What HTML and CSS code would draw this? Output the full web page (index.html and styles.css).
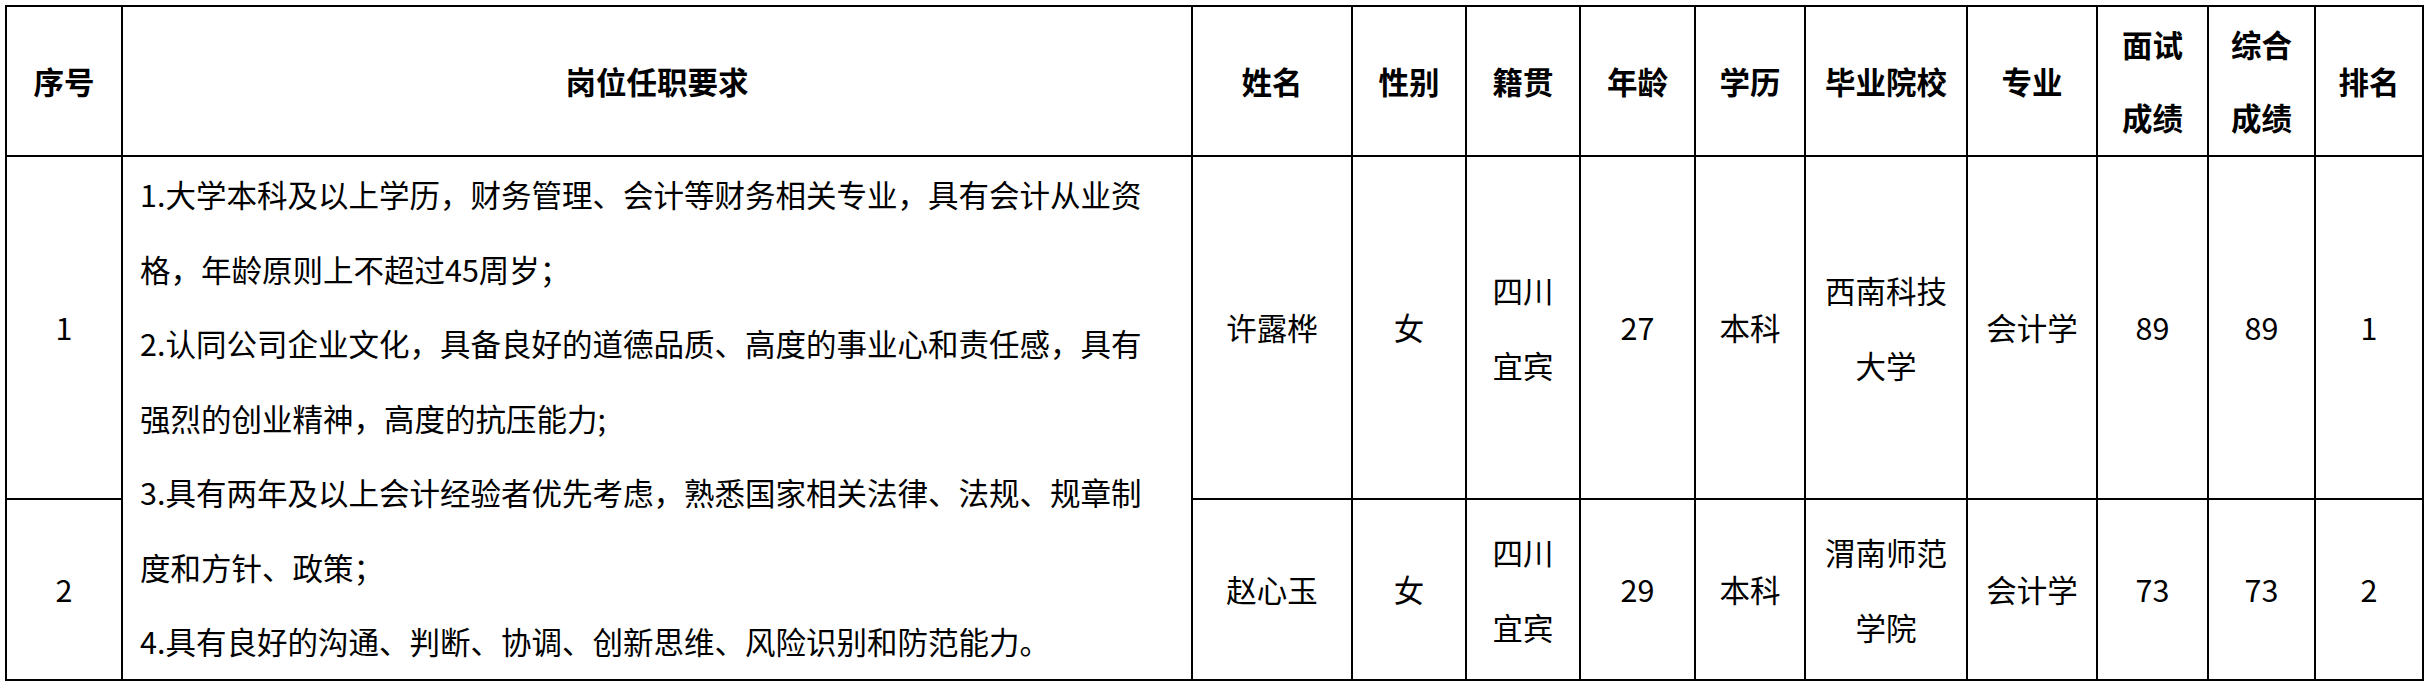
FILE: index.html
```html
<!DOCTYPE html>
<html lang="zh-CN">
<head>
<meta charset="utf-8">
<title>面试成绩表</title>
<link rel="stylesheet" href="styles.css">
</head>
<body>
<table class="grid">
  <colgroup>
    <col class="c-no">
    <col class="c-req">
    <col class="c-name">
    <col class="c-sex">
    <col class="c-origin">
    <col class="c-age">
    <col class="c-edu">
    <col class="c-school">
    <col class="c-major">
    <col class="c-score">
    <col class="c-total">
    <col class="c-rank">
  </colgroup>
  <thead>
    <tr class="row-head">
      <th>序号</th>
      <th>岗位任职要求</th>
      <th>姓名</th>
      <th>性别</th>
      <th>籍贯</th>
      <th>年龄</th>
      <th>学历</th>
      <th>毕业院校</th>
      <th>专业</th>
      <th>面试<br>成绩</th>
      <th>综合<br>成绩</th>
      <th>排名</th>
    </tr>
  </thead>
  <tbody>
    <tr class="row-1">
      <td>1</td>
      <td class="req" rowspan="2">1.大学本科及以上学历，财务管理、会计等财务相关专业，具有会计从业资<br>格，年龄原则上不超过45周岁；<br>2.认同公司企业文化，具备良好的道德品质、高度的事业心和责任感，具有<br>强烈的创业精神，高度的抗压能力;<br>3.具有两年及以上会计经验者优先考虑，熟悉国家相关法律、法规、规章制<br>度和方针、政策；<br>4.具有良好的沟通、判断、协调、创新思维、风险识别和防范能力。</td>
      <td>许露桦</td>
      <td>女</td>
      <td>四川<br>宜宾</td>
      <td>27</td>
      <td>本科</td>
      <td>西南科技<br>大学</td>
      <td>会计学</td>
      <td>89</td>
      <td>89</td>
      <td>1</td>
    </tr>
    <tr class="row-2">
      <td>2</td>
      <td>赵心玉</td>
      <td>女</td>
      <td>四川<br>宜宾</td>
      <td>29</td>
      <td>本科</td>
      <td>渭南师范<br>学院</td>
      <td>会计学</td>
      <td>73</td>
      <td>73</td>
      <td>2</td>
    </tr>
  </tbody>
</table>
</body>
</html>
```
FILE: styles.css
```css
html, body {
  margin: 0;
  padding: 0;
  background: #ffffff;
}

body {
  font-family: "Noto Sans CJK SC", "Noto Sans", sans-serif;
  color: #000000;
}

.grid {
  margin: 5px 0 0 5px;
  border-collapse: collapse;
  table-layout: fixed;
  width: 2417px;
  font-size: 30.5px;
}

.grid th,
.grid td {
  border: 2px solid #000000;
  padding: 0;
  text-align: center;
  vertical-align: middle;
  white-space: nowrap;
  line-height: 74.5px;
}

.grid th {
  font-weight: 700;
  line-height: 73px;
}

.c-no { width: 116px; }
.c-req { width: 1070px; }
.c-name { width: 160px; }
.c-sex { width: 114px; }
.c-origin { width: 114px; }
.c-age { width: 115px; }
.c-edu { width: 110px; }
.c-school { width: 162px; }
.c-major { width: 130px; }
.c-score { width: 111px; }
.c-total { width: 107px; }
.c-rank { width: 108px; }

.row-head { height: 150px; }
.row-1 { height: 343px; }
.row-2 { height: 181px; }

.grid td.req {
  text-align: left;
  padding-left: 17px;
}
```
